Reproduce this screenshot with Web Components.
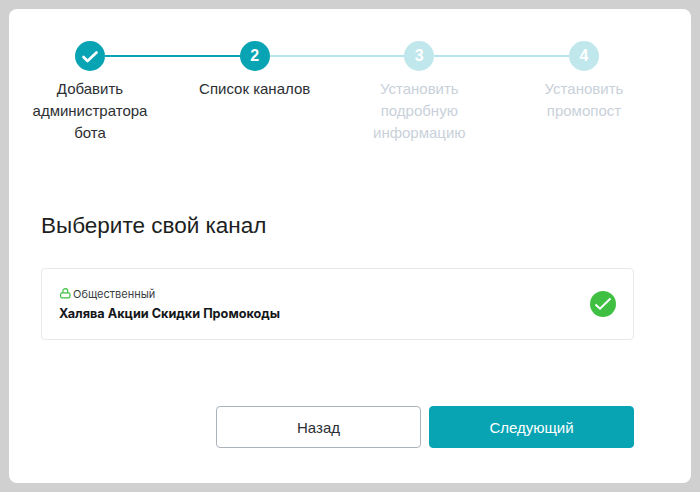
<!DOCTYPE html>
<html>
<head>
<meta charset="utf-8">
<title>Выберите свой канал</title>
<style>
  html, body { margin: 0; background: #d0d0d0; }
  body { font-family: "Liberation Sans", sans-serif; height: 492px; overflow: hidden; }
</style>
</head>
<body>
<wizard-panel>
  <step-bar slot="steps">
    <wizard-step state="done" label="Добавить администратора бота"></wizard-step>
    <wizard-step state="current" number="2" label="Список каналов"></wizard-step>
    <wizard-step number="3" label="Установить подробную информацию"></wizard-step>
    <wizard-step number="4" label="Установить промопост" last></wizard-step>
  </step-bar>
  <span slot="title">Выберите свой канал</span>
  <channel-card type="Общественный" name="Халява Акции Скидки Промокоды"></channel-card>
  <wizard-button slot="actions">Назад</wizard-button>
  <wizard-button slot="actions" primary>Следующий</wizard-button>
</wizard-panel>

<script>
class WizardPanel extends HTMLElement {
  constructor() {
    super();
    this.attachShadow({ mode: "open" });
    this.shadowRoot.innerHTML = `
      <style>
        :host { display: block; margin: 9px; height: 474px; background: #fff; border-radius: 8px; box-sizing: border-box; padding-top: 32px; }
        .title { margin: 0 0 27px 32px; height: 30px; font: 400 22.5px/30px "Liberation Sans", sans-serif; color: #1c1e21; }
        .body { margin: 0 57px 0 32px; }
        .actions { display: flex; justify-content: flex-end; gap: 8px; margin: 66px 57px 0 0; }
        .steps { height: 170px; }
      </style>
      <div class="steps"><slot name="steps"></slot></div>
      <h2 class="title"><slot name="title"></slot></h2>
      <div class="body"><slot></slot></div>
      <div class="actions"><slot name="actions"></slot></div>
    `;
  }
}

class StepBar extends HTMLElement {
  constructor() {
    super();
    this.attachShadow({ mode: "open" });
    this.shadowRoot.innerHTML = `
      <style>
        :host { display: grid; grid-template-columns: repeat(4, 162px); column-gap: 2.67px; }
      </style>
      <slot></slot>
    `;
  }
}

class WizardStep extends HTMLElement {
  constructor() {
    super();
    this.attachShadow({ mode: "open" });
  }

  connectedCallback() {
    const state = this.getAttribute("state") || "todo";
    const number = this.getAttribute("number") || "";
    const label = this.getAttribute("label") || "";
    const check = `<svg width="18" height="18" viewBox="0 0 18 18" fill="none" stroke="#fff" stroke-width="2.7" stroke-linecap="round" stroke-linejoin="round"><path d="M2.5 10l4 4L15.5 5.5"/></svg>`;
    this.shadowRoot.innerHTML = `
      <style>
        :host { display: flex; flex-direction: column; align-items: center; position: relative; font: 400 15px/22px "Liberation Sans", sans-serif; color: #2b2f33; }
        :host(:not([state])) { color: #c9d1da; }
        .dot { width: 30px; height: 30px; border-radius: 50%; background: #08a4b3; color: #fff; display: flex; align-items: center; justify-content: center; font-weight: 700; font-size: 16px; position: relative; z-index: 1; }
        :host(:not([state])) .dot { background: #c0e7ec; }
        .line { position: absolute; top: 14px; left: 50%; width: 165px; height: 2px; background: #b5e6ec; }
        :host([state="done"]) .line { background: #08a4b3; }
        :host([last]) .line { display: none; }
        .label { margin-top: 7px; width: 125px; text-align: center; }
      </style>
      <div class="line"></div>
      <div class="dot">${state === "done" ? check : number}</div>
      <div class="label">${label}</div>
    `;
  }
}

class ChannelCard extends HTMLElement {
  constructor() {
    super();
    this.attachShadow({ mode: "open" });
  }

  connectedCallback() {
    const type = this.getAttribute("type") || "";
    const name = this.getAttribute("name") || "";
    this.shadowRoot.innerHTML = `
      <style>
        :host { display: flex; align-items: center; justify-content: space-between; box-sizing: border-box; height: 72px; padding: 0 17px; border: 1px solid #e6e8ec; border-radius: 4px; background: #fff; font-family: Inter, sans-serif; color: #14171a; }
        .type { display: flex; align-items: center; gap: 2px; font-size: 11px; line-height: 14px; color: #3a3f45; }
        .name { margin-top: 5px; font-size: 12.7px; line-height: 16px; font-weight: 700; }
        svg { display: block; }
      </style>
      <div>
        <div class="type">
          <svg width="12" height="12" viewBox="0 0 12 12" fill="none" stroke="#3fc042" stroke-width="1.2"><rect x="1.6" y="4.8" width="9.4" height="5" rx="1.6"/><path d="M3.9 4.8V3a2.4 2.4 0 0 1 4.8 0V4.8"/></svg>
          <span>${type}</span>
        </div>
        <div class="name">${name}</div>
      </div>
      <svg width="26" height="26" viewBox="0 0 26 26"><circle cx="13" cy="13" r="13" fill="#3fc042"/><path d="M5.5 13.5l4.5 4.2L20.5 7.5" fill="none" stroke="#fff" stroke-width="2"/></svg>
    `;
  }
}

class WizardButton extends HTMLElement {
  constructor() {
    super();
    this.attachShadow({ mode: "open" });
    this.shadowRoot.innerHTML = `
      <style>
        :host { display: flex; align-items: center; justify-content: center; box-sizing: border-box; width: 205px; height: 42px; border: 1px solid #adb3ba; border-radius: 4px; background: #fff; color: #2b2f33; font: 400 15px "Liberation Sans", sans-serif; }
        :host([primary]) { background: #08a4b3; border-color: #08a4b3; color: #fff; }
      </style>
      <slot></slot>
    `;
  }
}

customElements.define("wizard-panel", WizardPanel);
customElements.define("step-bar", StepBar);
customElements.define("wizard-step", WizardStep);
customElements.define("channel-card", ChannelCard);
customElements.define("wizard-button", WizardButton);
</script>
</body>
</html>
